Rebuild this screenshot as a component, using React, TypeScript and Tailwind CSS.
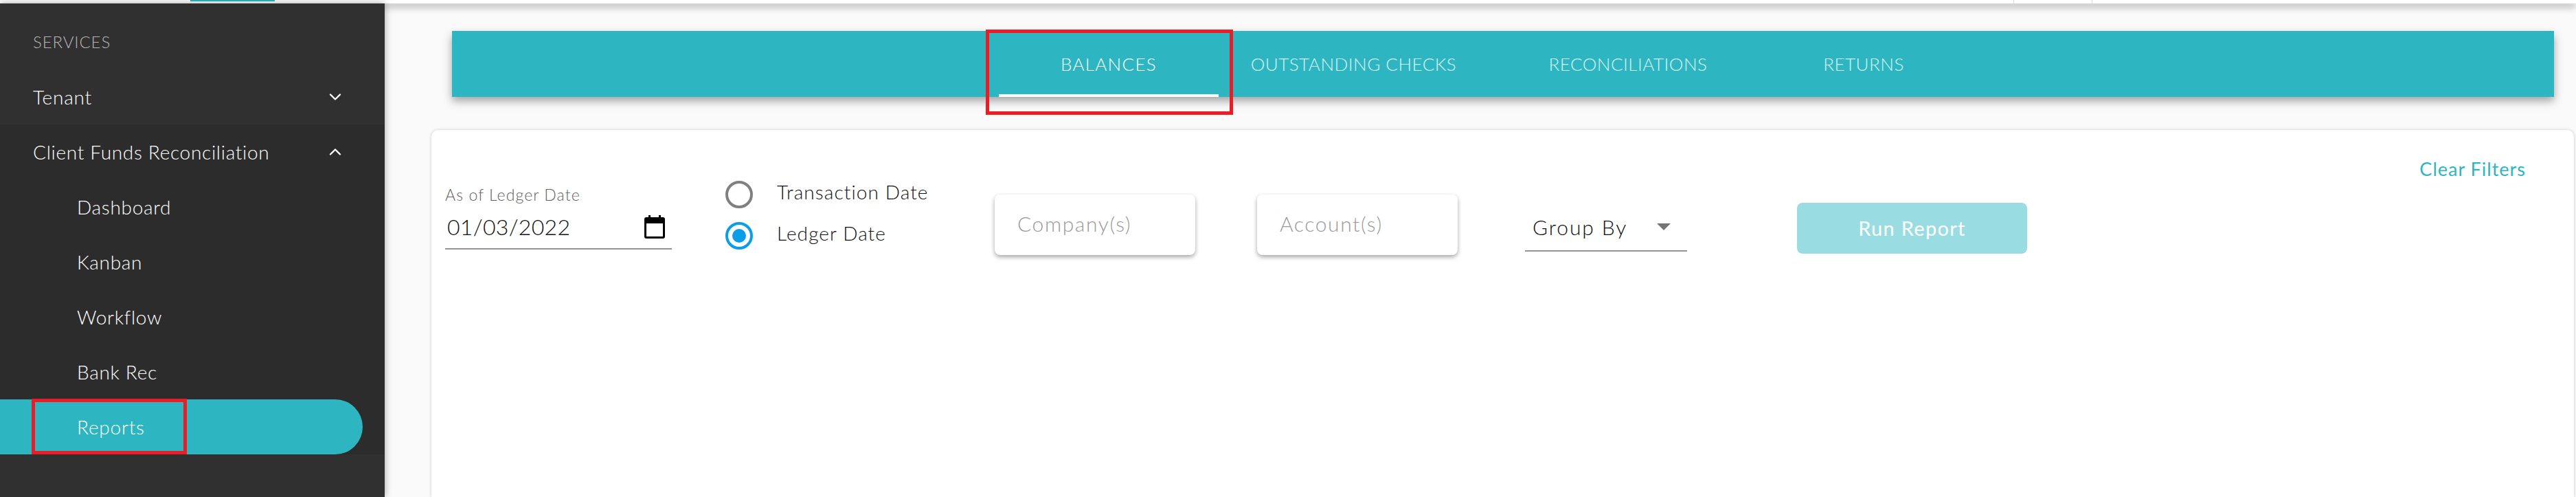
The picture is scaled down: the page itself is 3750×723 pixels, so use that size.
// Reports page - Client Funds Reconciliation, Balances tab

import { ChevronDown, ChevronUp } from "lucide-react";

const subItems = ["Dashboard", "Kanban", "Workflow", "Bank Rec"];

const tabs = [
  { label: "BALANCES", width: "w-[320px]", active: true },
  { label: "OUTSTANDING CHECKS", width: "w-[393px]", active: false },
  { label: "RECONCILIATIONS", width: "w-[406px]", active: false },
  { label: "RETURNS", width: "w-[280px]", active: false },
];

function Sidebar() {
  return (
    <div className="w-[560px] shrink-0 bg-[#303030] text-white text-[28px] font-light flex flex-col">
      <div className="h-[96px] pt-[40px] pl-[48px] text-[24px] leading-[32px] text-[#b4b4b4] tracking-[0.9px]">
        SERVICES
      </div>
      <div className="h-[80px] flex items-center justify-between pl-[48px] pr-[58px] tracking-[0.8px]">
        <span>Tenant</span>
        <ChevronDown size={28} strokeWidth={2} />
      </div>
      <div className="bg-[#2c2c2c] flex flex-col">
        <div className="h-[80px] flex items-center justify-between pl-[48px] pr-[58px]">
          <span className="tracking-[0.7px]">Client Funds Reconciliation</span>
          <ChevronUp size={28} strokeWidth={2} />
        </div>
        {subItems.map((item) => (
          <div key={item} className="h-[80px] flex items-center pl-[112px] tracking-[0.7px]">
            {item}
          </div>
        ))}
        {/* Active row */}
        <div className="relative h-[80px] w-[528px] flex items-center pl-[112px] bg-[#2db6c1] rounded-r-[40px] tracking-[0.8px]">
          Reports
          <div className="absolute left-[46px] top-[-1px] w-[226px] h-[81px] border-[5px] border-[#ed1c24]" />
        </div>
      </div>
    </div>
  );
}

function TabBar() {
  return (
    <div className="ml-[98px] mr-[32px] mt-[40px] h-[96px] pl-[796px] flex bg-[#2db6c1] shadow-[0_6px_12px_rgba(0,0,0,0.35)]">
      {tabs.map((tab) => (
        <div
          key={tab.label}
          className={`relative h-full ${tab.width} flex items-center justify-center text-[26px] font-light ${
            tab.active ? "text-white tracking-[1.3px]" : "text-white/80 tracking-[0.5px]"
          }`}
        >
          {tab.label}
          {tab.active && (
            <>
              <div className="absolute left-0 right-0 bottom-0 h-[4px] bg-white" />
              <div className="absolute left-[-19px] top-[-2px] w-[360px] h-[124px] border-[5px] border-[#ed1c24]" />
            </>
          )}
        </div>
      ))}
    </div>
  );
}

function CalendarIcon() {
  return (
    <svg width="30" height="34" viewBox="0 0 30 34" className="shrink-0">
      <rect x="6" y="0" width="3" height="6" fill="#000" />
      <rect x="21" y="0" width="3" height="6" fill="#000" />
      <path
        d="M3 3h24a3 3 0 0 1 3 3v25a3 3 0 0 1-3 3H3a3 3 0 0 1-3-3V6a3 3 0 0 1 3-3zM3 12v19h24V12z"
        fill="#000"
        fillRule="evenodd"
      />
    </svg>
  );
}

function Radio({ checked, label }: { checked?: boolean; label: string }) {
  return (
    <div className="h-[60px] flex items-start">
      <div
        className={`w-[40px] h-[40px] rounded-full border-[4px] flex items-center justify-center ${
          checked ? "border-[#0b9ee8]" : "border-[#808080]"
        }`}
      >
        {checked && <div className="w-[20px] h-[20px] rounded-full bg-[#0b9ee8]" />}
      </div>
      <span className="ml-[35px] mt-[-4px] text-[28px] leading-[40px] tracking-[1.1px] font-light text-[#111111]">{label}</span>
    </div>
  );
}

function FilterBox({ placeholder }: { placeholder: string }) {
  return (
    <div className="w-[292px] h-[88px] mt-[20px] pl-[33px] pb-[3px] flex items-center rounded-[8px] bg-white text-[30px] tracking-[1.6px] font-light text-[#9a9a9a] shadow-[0_3px_6px_rgba(0,0,0,0.35)]">
      {placeholder}
    </div>
  );
}

function FilterCard() {
  return (
    <div className="ml-[68px] mr-[3px] mt-[48px] flex-1 pt-[41px] bg-white rounded-t-[10px] shadow-[0_0_4px_rgba(0,0,0,0.2)]">
      <div className="h-[33px] pr-[70px] flex items-center justify-end text-[27px] tracking-[1px] text-[#2db6c1]">
        Clear Filters
      </div>
      <div className="pl-[20px] flex items-start">
        {/* Ledger date */}
        <div className="w-[330px] mt-[5px] flex flex-col border-b-2 border-[#949494] h-[95px]">
          <span className="text-[23px] leading-[30px] tracking-[1.1px] font-light text-[#616161]">As of Ledger Date</span>
          <div className="mt-[14px] pl-[3px] pr-[10px] flex items-center justify-between">
            <span className="text-[32px] leading-[36px] tracking-[0.3px] font-light text-[#111111]">01/03/2022</span>
            <CalendarIcon />
          </div>
        </div>

        {/* Date type */}
        <div className="w-[392px] ml-[78px] flex flex-col">
          <Radio label="Transaction Date" />
          <Radio checked label="Ledger Date" />
        </div>

        <FilterBox placeholder="Company(s)" />
        <div className="ml-[90px]">
          <FilterBox placeholder="Account(s)" />
        </div>

        {/* Group by */}
        <div className="w-[236px] h-[68px] mt-[35px] ml-[98px] pl-[11px] pb-[2px] flex items-center border-b-2 border-[#949494] text-[30px] tracking-[1.9px] font-light text-[#111111]">
          <span>Group By</span>
          <div className="ml-[43px] w-0 h-0 border-x-[10px] border-x-transparent border-t-[10px] border-t-[#757575]" />
        </div>

        <div className="w-[335px] h-[74px] mt-[32px] ml-[160px] flex items-center justify-center rounded-[8px] bg-[#99dde2] text-[29px] tracking-[1.3px] text-white">
          Run Report
        </div>
      </div>
    </div>
  );
}

export default function App() {
  return (
    <div className="w-[3750px] h-[723px] overflow-hidden flex flex-col bg-[#fafafa] font-['Lato',sans-serif]">
      {/* Top bar */}
      <div className="relative z-10 h-[5px] shrink-0 bg-white shadow-[0_4px_12px_rgba(0,0,0,0.45)]">
        <div className="ml-[277px] w-[123px] h-[2px] bg-[#2db6c1]" />
        <div className="absolute left-[2931px] top-0 h-[5px] w-px bg-[#dddddd]" />
        <div className="absolute left-[3045px] top-0 h-[5px] w-px bg-[#dddddd]" />
      </div>

      <div className="flex flex-1 min-h-0">
        <div className="relative z-20 flex shadow-[0_0_10px_rgba(0,0,0,0.35)]">
          <Sidebar />
        </div>
        <div className="flex-1 flex flex-col min-w-0">
          <TabBar />
          <FilterCard />
        </div>
      </div>
    </div>
  );
}
